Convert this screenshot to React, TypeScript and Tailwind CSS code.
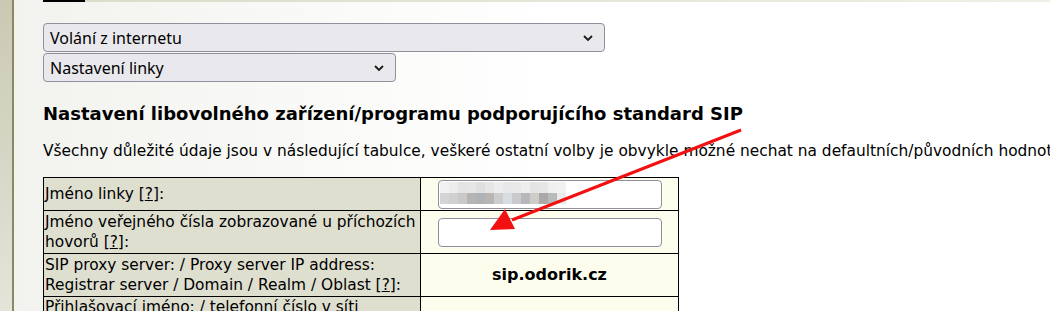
import React from "react";

const mosaicTop = [
  "bg-[#f1f1f1]", "bg-[#ececec]", "bg-[#e4e4e4]", "bg-[#e6e6e6]", "bg-[#dedfe0]", "bg-[#e6e6e6]",
  "bg-[#ededed]", "bg-[#e8e8ea]", "bg-[#e9e9e9]", "bg-[#eeeeee]", "bg-[#e4e4e4]", "bg-[#e6e6e6]",
  "bg-[#f0f0f0]", "bg-[#f1f1f1]",
];
const mosaicBottom = [
  "bg-[#d4d4d4]", "bg-[#d0d0d0]", "bg-[#cbc9c8]", "bg-[#b5b5b5]", "bg-[#b0b3b5]", "bg-[#b9b5b2]",
  "bg-[#cdcdcd]", "bg-[#d7dde0]", "bg-[#c9cacc]", "bg-[#b8b8bc]", "bg-[#d0ccc8]", "bg-[#aca8a8]",
  "bg-[#b8babc]", "bg-[#e8ecef]",
];

function Chevron() {
  return (
    <svg width="12" height="8" viewBox="0 0 12 8" className="shrink-0">
      <path d="M2 2 L6 6 L10 2" fill="none" stroke="#1a1a1a" strokeWidth="1.8" />
    </svg>
  );
}

function Select({ label, width }: { label: string; width: string }) {
  return (
    <div
      className={`${width} h-[29px] flex items-center justify-between rounded-[4px] border border-[#8f8f9d] bg-[#e9e9ed] pl-[6px] pr-[10px] text-[16px] text-black font-['Noto_Sans',sans-serif]`}
    >
      <span>{label}</span>
      <Chevron />
    </div>
  );
}

function Help() {
  return (
    <>
      [<span className="underline">?</span>]
    </>
  );
}

export default function App() {
  return (
    <div className="relative w-[1050px] h-[311px] overflow-hidden bg-white flex font-['DejaVu_Sans',sans-serif] text-black">
      <div className="w-[12px] shrink-0 bg-gradient-to-b from-[#c9c9b3] to-[#e4e4da]" />
      <div className="w-[2px] shrink-0 bg-[#8a8a62]" />
      <div className="flex-1 bg-gradient-to-r from-[#f2f2ee] via-white to-white">
        <div className="h-[2px] flex">
          <div className="w-[29px]" />
          <div className="w-[42px] bg-black" />
          <div className="flex-1 bg-gradient-to-r from-[#dcdccb] to-[#f0f0e6]" />
        </div>
        <div className="pl-[29px] pt-[21px]">
          <div className="flex flex-col gap-[1px]">
            <Select label="Volání z internetu" width="w-[562px]" />
            <Select label="Nastavení linky" width="w-[353px]" />
          </div>
          <h2 className="mt-[21px] text-[18px] font-bold leading-[22px] whitespace-nowrap">
            Nastavení libovolného zařízení/programu podporujícího standard SIP
          </h2>
          <p className="mt-[17px] text-[15.4px] leading-[18px] whitespace-nowrap">
            Všechny důležité údaje jsou v následující tabulce, veškeré ostatní volby je obvykle možné nechat na defaultních/původních hodnotách.
          </p>
          <table className="mt-[17px] table-fixed w-[636px] border-collapse border border-black text-[15.4px] leading-[20px]">
            <tbody>
              <tr className="h-[33px]">
                <td className="w-[377px] border border-black bg-[#dfdfd0] px-[1px] align-middle whitespace-nowrap">
                  Jméno linky <Help />:
                </td>
                <td className="border border-black bg-[#fdfdee] align-middle">
                  <div className="mx-auto w-[224px] h-[29px] rounded-[4px] border border-[#8f8f9d] bg-white overflow-hidden pt-[1px] pl-[1px]">
                    <div className="flex">
                      {mosaicTop.map((c, i) => (
                        <div key={i} className={`w-[9px] h-[11px] ${c}`} />
                      ))}
                    </div>
                    <div className="flex">
                      {mosaicBottom.map((c, i) => (
                        <div key={i} className={`w-[9px] h-[11px] ${c}`} />
                      ))}
                    </div>
                  </div>
                </td>
              </tr>
              <tr className="h-[43px]">
                <td className="border border-black bg-[#dfdfd0] px-[1px] align-middle whitespace-nowrap">
                  Jméno veřejného čísla zobrazované u příchozích
                  <br />
                  hovorů <Help />:
                </td>
                <td className="border border-black bg-[#fdfdee] align-middle">
                  <div className="mx-auto w-[224px] h-[29px] rounded-[4px] border border-[#8f8f9d] bg-white" />
                </td>
              </tr>
              <tr className="h-[43px]">
                <td className="border border-black bg-[#dfdfd0] px-[1px] align-middle whitespace-nowrap">
                  SIP proxy server: / Proxy server IP address:
                  <br />
                  Registrar server / Domain / Realm / Oblast <Help />:
                </td>
                <td className="border border-black bg-[#fdfdee] text-center font-bold text-[16px] align-middle">
                  sip.odorik.cz
                </td>
              </tr>
              <tr className="h-[43px]">
                <td className="border border-black bg-[#dfdfd0] px-[1px] align-top whitespace-nowrap">
                  Přihlašovací jméno: / telefonní číslo v síti
                </td>
                <td className="border border-black bg-[#fdfdee]" />
              </tr>
            </tbody>
          </table>
        </div>
      </div>
      <svg className="absolute left-0 top-0 pointer-events-none" width="1050" height="311">
        <line x1="741" y1="130" x2="512" y2="220" stroke="#f31010" strokeWidth="3" />
        <polygon points="490,230 505,209 515,229" fill="#f31010" />
      </svg>
    </div>
  );
}
